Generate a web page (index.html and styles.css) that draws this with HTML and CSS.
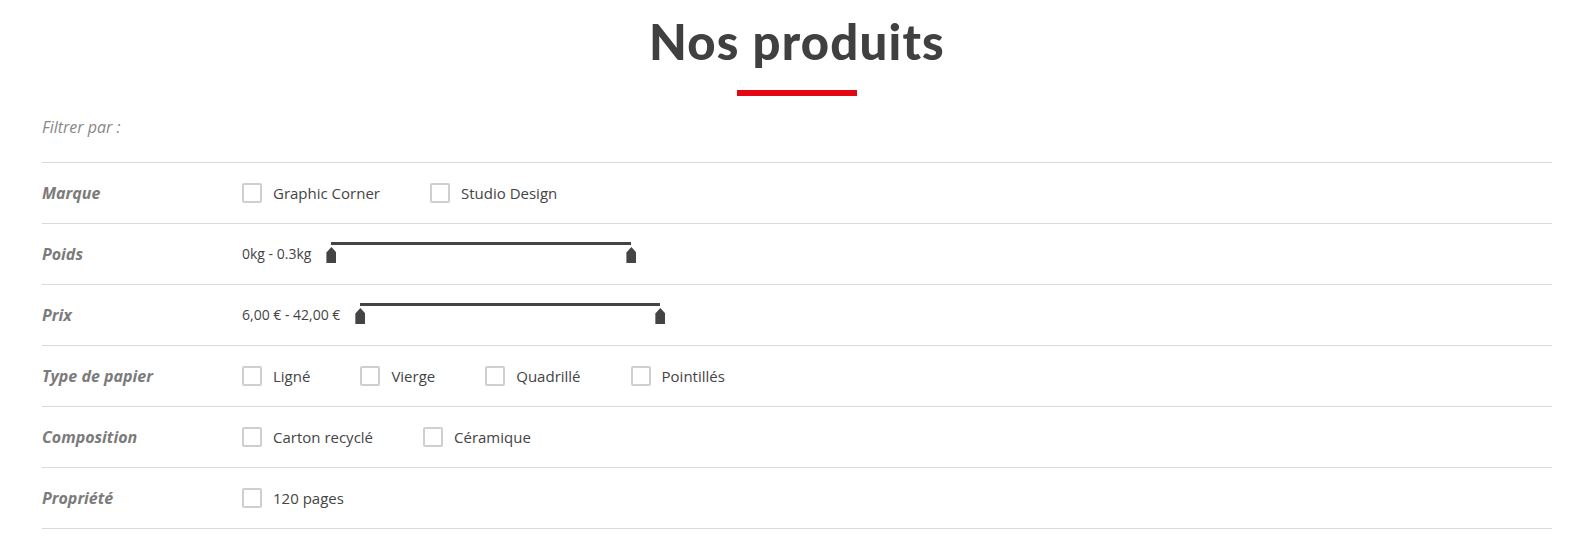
FILE: index.html
```html
<!DOCTYPE html>
<html lang="fr">

<head>
    <meta charset="UTF-8">
    <meta name="viewport" content="width=device-width, initial-scale=1.0">
    <title>Nos produits</title>
    <link rel="stylesheet" href="styles.css">
</head>

<body>

    <div class="products">
        <h1 class="products_title">Nos produits</h1>
        <div class="products_underline"></div>

        <p class="filters_intro">Filtrer par :</p>

        <div class="filters">
            <div class="filter_row">
                <div class="filter_name">Marque</div>
                <div class="filter_values">
                    <label class="option"><input type="checkbox"><span>Graphic Corner</span></label>
                    <label class="option"><input type="checkbox"><span>Studio Design</span></label>
                </div>
            </div>

            <div class="filter_row">
                <div class="filter_name">Poids</div>
                <div class="filter_values">
                    <span class="range_text">0kg - 0.3kg</span>
                    <div class="range">
                        <div class="range_bar"></div>
                        <span class="range_handle range_handle--min"></span>
                        <span class="range_handle range_handle--max"></span>
                    </div>
                </div>
            </div>

            <div class="filter_row">
                <div class="filter_name">Prix</div>
                <div class="filter_values">
                    <span class="range_text">6,00 € - 42,00 €</span>
                    <div class="range">
                        <div class="range_bar"></div>
                        <span class="range_handle range_handle--min"></span>
                        <span class="range_handle range_handle--max"></span>
                    </div>
                </div>
            </div>

            <div class="filter_row">
                <div class="filter_name">Type de papier</div>
                <div class="filter_values">
                    <label class="option"><input type="checkbox"><span>Ligné</span></label>
                    <label class="option"><input type="checkbox"><span>Vierge</span></label>
                    <label class="option"><input type="checkbox"><span>Quadrillé</span></label>
                    <label class="option"><input type="checkbox"><span>Pointillés</span></label>
                </div>
            </div>

            <div class="filter_row">
                <div class="filter_name">Composition</div>
                <div class="filter_values">
                    <label class="option"><input type="checkbox"><span>Carton recyclé</span></label>
                    <label class="option"><input type="checkbox"><span>Céramique</span></label>
                </div>
            </div>

            <div class="filter_row">
                <div class="filter_name">Propriété</div>
                <div class="filter_values">
                    <label class="option"><input type="checkbox"><span>120 pages</span></label>
                </div>
            </div>
        </div>
    </div>

</body>

</html>
```

FILE: styles.css
```css
body {
    margin: 0;
    background: #fff;
    font-family: "Open Sans", sans-serif;
    color: #444;
}

.products {
    padding: 17px 32px 0 42px;
}

.products_title {
    margin: 0;
    font-family: Lato, sans-serif;
    font-size: 49px;
    font-weight: 900;
    line-height: 48px;
    letter-spacing: 1.2px;
    color: #404040;
    text-align: center;
}

.products_underline {
    width: 120px;
    height: 6px;
    margin: 25px auto 0;
    background: #e30613;
}

.filters_intro {
    margin: 21px 0 25px;
    font-size: 16px;
    line-height: 20px;
    font-style: italic;
    color: #888;
}

.filters {
    border-top: 1px solid #d6dadb;
}

.filter_row {
    display: flex;
    align-items: center;
    height: 60px;
    border-bottom: 1px solid #d6dadb;
}

.filter_name {
    width: 200px;
    font-size: 16px;
    line-height: 20px;
    font-weight: 700;
    font-style: italic;
    color: #7b7b7b;
}

.filter_values {
    display: flex;
    align-items: center;
}

.option {
    display: flex;
    align-items: center;
    margin-right: 50px;
    font-size: 15px;
    line-height: 20px;
    cursor: pointer;
}

.option input {
    appearance: none;
    -webkit-appearance: none;
    box-sizing: border-box;
    width: 20px;
    height: 20px;
    margin: 0 11px 0 0;
    border: 2px solid #cfcfcf;
    border-radius: 2px;
    background: #fff;
}

.range_text {
    font-size: 14px;
    line-height: 20px;
}

.range {
    position: relative;
    width: 300px;
    height: 21px;
    margin: 0 0 3px 20px;
}

.range_bar {
    height: 3px;
    background: #444;
}

.range_handle {
    position: absolute;
    top: 5px;
    width: 10px;
    height: 16px;
    background: #444;
    clip-path: polygon(50% 0, 100% 35%, 100% 100%, 0 100%, 0 35%);
}

.range_handle--min {
    left: -5px;
}

.range_handle--max {
    right: -5px;
}
```
